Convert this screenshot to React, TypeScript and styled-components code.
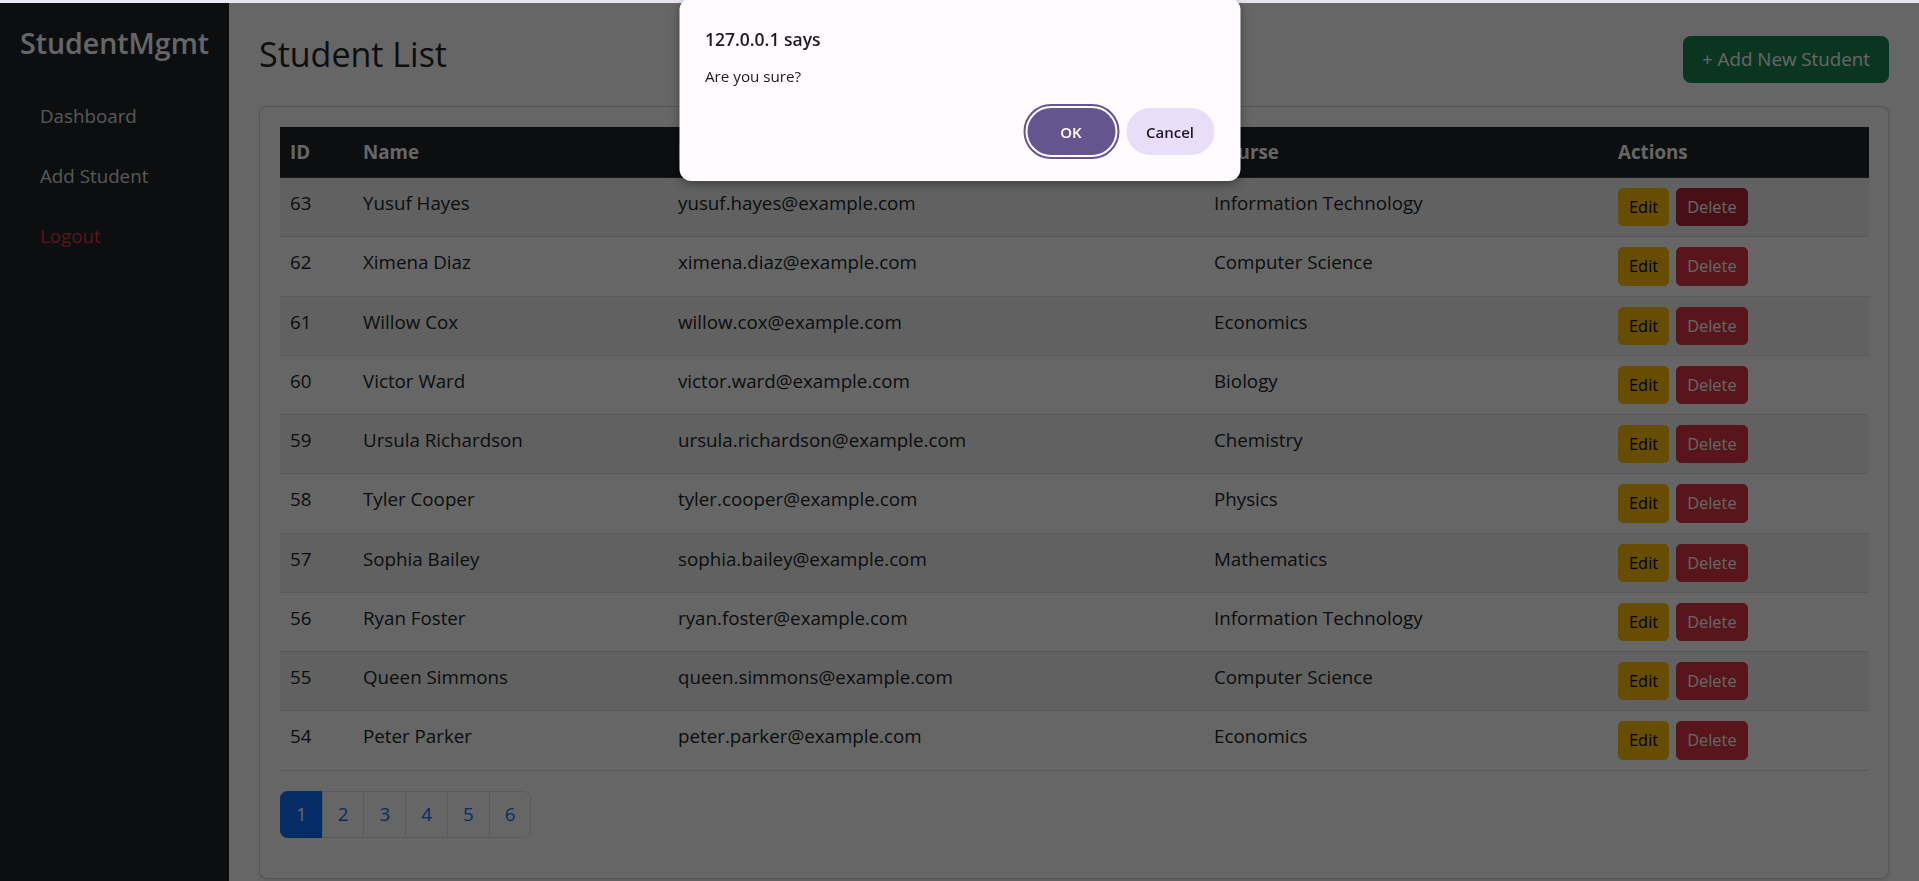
import React from "react";
import styled, { createGlobalStyle, css } from "styled-components";

const Global = createGlobalStyle`
  html, body { margin: 0; padding: 0; }
  * { box-sizing: border-box; }
  body {
    font-family: "Open Sans", "Noto Sans", "Liberation Sans", sans-serif;
    font-size: 18.75px;
    line-height: 30px;
    color: #212529;
    background: #fff;
  }
`;

const Layout = styled.div`
  display: flex;
  min-height: 100vh;
`;

const Sidebar = styled.aside`
  width: 229px;
  flex-shrink: 0;
  background: #212529;
  padding: 25px 20px;
  min-height: 100vh;
`;

const Brand = styled.h4`
  margin: 0 0 30px;
  font-size: 28.5px;
  font-weight: 600;
  line-height: 36px;
  color: #fff;
`;

const Nav = styled.nav`
  display: flex;
  flex-direction: column;
  gap: 10px;
`;

const NavLink = styled.a<{ $danger?: boolean }>`
  display: block;
  padding: 10px 20px;
  line-height: 30px;
  text-decoration: none;
  color: ${(p) => (p.$danger ? "#dc3545" : "rgba(255,255,255,0.85)")};
`;

const Main = styled.main`
  flex: 1;
  min-width: 0;
  padding: 30px;
`;

const TitleRow = styled.div`
  display: flex;
  justify-content: space-between;
  align-items: center;
  margin-bottom: 18px;
`;

const Title = styled.h2`
  margin: 0 0 10px;
  font-size: 34px;
  font-weight: 500;
  line-height: 48px;
`;

const AddButton = styled.button`
  font-family: inherit;
  font-size: 18.75px;
  line-height: 30px;
  padding: 7.5px 18px;
  border-radius: 7.5px;
  border: 1px solid #198754;
  background: #198754;
  color: #fff;
`;

const Card = styled.section`
  background: #fff;
  border: 1px solid rgba(0, 0, 0, 0.175);
  border-radius: 7.5px;
  box-shadow: 0 2.5px 5px rgba(0, 0, 0, 0.075);
`;

const CardBody = styled.div`
  padding: 20px;
`;

const Table = styled.table`
  width: 100%;
  border-collapse: collapse;
  table-layout: fixed;
  margin-bottom: 20px;
`;

const Th = styled.th<{ $w: number }>`
  width: ${(p) => p.$w}px;
  padding: 10px;
  text-align: left;
  font-weight: 700;
  line-height: 30px;
  background: #212529;
  color: #fff;
  border-bottom: 1px solid #373b3e;
`;

const Tr = styled.tr<{ $striped: boolean }>`
  & > td {
    background: ${(p) => (p.$striped ? "#f2f2f2" : "#fff")};
  }
`;

const Td = styled.td`
  padding: 10px;
  vertical-align: top;
  line-height: 30px;
  border-bottom: 1px solid #dee2e6;
  white-space: nowrap;
`;

const Actions = styled.div`
  display: flex;
  gap: 7px;
`;

type Variant = "warning" | "danger" | "dangerActive";

const variants: Record<Variant, ReturnType<typeof css>> = {
  warning: css`
    background: #ffc107;
    border-color: #ffc107;
    color: #000;
  `,
  danger: css`
    background: #dc3545;
    border-color: #dc3545;
    color: #fff;
  `,
  dangerActive: css`
    background: #b02a37;
    border-color: #a52834;
    color: #fff;
  `,
};

const ActionButton = styled.button<{ $variant: Variant }>`
  font-family: inherit;
  font-size: 16.4px;
  line-height: 26.25px;
  padding: 5px 10px;
  border: 1px solid;
  border-radius: 5px;
  ${(p) => variants[p.$variant]}
`;

const Pagination = styled.ul`
  display: flex;
  list-style: none;
  padding: 0;
  margin: 0 0 20px;
`;

const PageLink = styled.a<{ $active?: boolean; $first?: boolean; $last?: boolean }>`
  display: block;
  padding: 7.5px 15px;
  line-height: 30px;
  border: 1px solid #dee2e6;
  text-decoration: none;
  color: #0d6efd;
  background: #fff;
  margin-left: ${(p) => (p.$first ? "0" : "-1px")};
  border-radius: ${(p) =>
    p.$first ? "7.5px 0 0 7.5px" : p.$last ? "0 7.5px 7.5px 0" : "0"};
  ${(p) =>
    p.$active &&
    css`
      background: #0d6efd;
      border-color: #0d6efd;
      color: #fff;
    `}
`;

const Overlay = styled.div`
  position: fixed;
  inset: 0;
  background: rgba(0, 0, 0, 0.6);
  z-index: 10;
`;

const TopStrip = styled.div`
  position: fixed;
  top: 0;
  left: 0;
  right: 0;
  height: 3px;
  background: #ebe5f1;
  z-index: 11;
`;

const Dialog = styled.div`
  position: fixed;
  top: -2px;
  left: 50%;
  transform: translateX(-50%);
  width: 561px;
  background: #fffbfe;
  border-radius: 12px;
  padding: 29px 26px 26px;
  box-shadow: 0 3px 10px rgba(0, 0, 0, 0.35);
  color: #1d1b20;
  z-index: 12;
`;

const DialogTitle = styled.div`
  font-size: 17.5px;
  font-weight: 600;
  line-height: 24px;
  margin-bottom: 15px;
`;

const DialogMessage = styled.div`
  font-size: 15.2px;
  line-height: 20px;
  margin-bottom: 22px;
`;

const DialogButtons = styled.div`
  display: flex;
  justify-content: flex-end;
  gap: 11px;
`;

const DialogButton = styled.button<{ $primary?: boolean }>`
  font-family: inherit;
  height: 47px;
  min-width: 88px;
  padding: 0 16px;
  border-radius: 24px;
  border: none;
  font-size: 15px;
  font-weight: 600;
  ${(p) =>
    p.$primary
      ? css`
          background: #65558f;
          color: #fff;
          outline: 2.5px solid #65558f;
          outline-offset: 2px;
        `
      : css`
          background: #e8def8;
          color: #1d192b;
        `}
`;

const students = [
  [63, "Yusuf Hayes", "yusuf.hayes@example.com", "Information Technology"],
  [62, "Ximena Diaz", "ximena.diaz@example.com", "Computer Science"],
  [61, "Willow Cox", "willow.cox@example.com", "Economics"],
  [60, "Victor Ward", "victor.ward@example.com", "Biology"],
  [59, "Ursula Richardson", "ursula.richardson@example.com", "Chemistry"],
  [58, "Tyler Cooper", "tyler.cooper@example.com", "Physics"],
  [57, "Sophia Bailey", "sophia.bailey@example.com", "Mathematics"],
  [56, "Ryan Foster", "ryan.foster@example.com", "Information Technology"],
  [55, "Queen Simmons", "queen.simmons@example.com", "Computer Science"],
  [54, "Peter Parker", "peter.parker@example.com", "Economics"],
] as const;

const columns: [string, number][] = [
  ["ID", 73],
  ["Name", 315],
  ["Email", 536],
  ["Course", 404],
  ["Actions", 261],
];

export default function App() {
  const pages = [1, 2, 3, 4, 5, 6];
  return (
    <>
      <Global />
      <Layout>
        <Sidebar>
          <Brand>StudentMgmt</Brand>
          <Nav>
            <NavLink href="#">Dashboard</NavLink>
            <NavLink href="#">Add Student</NavLink>
            <NavLink href="#" $danger>
              Logout
            </NavLink>
          </Nav>
        </Sidebar>
        <Main>
          <TitleRow>
            <Title>Student List</Title>
            <AddButton>+ Add New Student</AddButton>
          </TitleRow>
          <Card>
            <CardBody>
              <Table>
                <thead>
                  <tr>
                    {columns.map(([label, w]) => (
                      <Th key={label} $w={w}>
                        {label}
                      </Th>
                    ))}
                  </tr>
                </thead>
                <tbody>
                  {students.map(([id, name, email, course], i) => (
                    <Tr key={id} $striped={i % 2 === 0}>
                      <Td>{id}</Td>
                      <Td>{name}</Td>
                      <Td>{email}</Td>
                      <Td>{course}</Td>
                      <Td>
                        <Actions>
                          <ActionButton $variant="warning">Edit</ActionButton>
                          <ActionButton $variant={i === 0 ? "dangerActive" : "danger"}>
                            Delete
                          </ActionButton>
                        </Actions>
                      </Td>
                    </Tr>
                  ))}
                </tbody>
              </Table>
              <Pagination>
                {pages.map((n, i) => (
                  <li key={n}>
                    <PageLink
                      href="#"
                      $active={n === 1}
                      $first={i === 0}
                      $last={i === pages.length - 1}
                    >
                      {n}
                    </PageLink>
                  </li>
                ))}
              </Pagination>
            </CardBody>
          </Card>
        </Main>
      </Layout>
      <Overlay />
      <TopStrip />
      <Dialog role="alertdialog">
        <DialogTitle>127.0.0.1 says</DialogTitle>
        <DialogMessage>Are you sure?</DialogMessage>
        <DialogButtons>
          <DialogButton $primary>OK</DialogButton>
          <DialogButton>Cancel</DialogButton>
        </DialogButtons>
      </Dialog>
    </>
  );
}
